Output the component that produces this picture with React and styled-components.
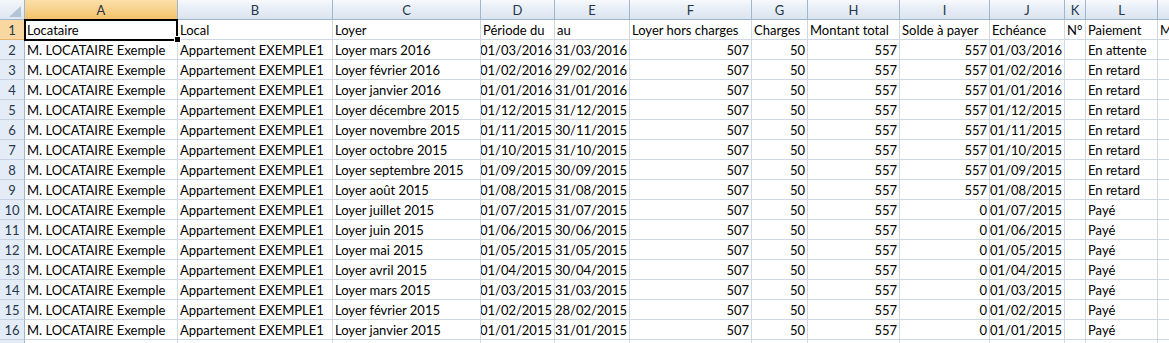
import React from "react";
import styled, { createGlobalStyle } from "styled-components";

const Global = createGlobalStyle`
  html, body { margin: 0; padding: 0; background: #fff; overflow: hidden; }
  body { font-family: Lato, "Liberation Sans", sans-serif; }
`;

const COLS = [
  { key: "A", w: 153 },
  { key: "B", w: 155 },
  { key: "C", w: 148 },
  { key: "D", w: 74 },
  { key: "E", w: 75 },
  { key: "F", w: 122 },
  { key: "G", w: 56 },
  { key: "H", w: 92 },
  { key: "I", w: 90 },
  { key: "J", w: 75 },
  { key: "K", w: 21 },
  { key: "L", w: 72 },
  { key: "M", w: 80 },
];

const Sheet = styled.div`
  display: grid;
  grid-template-columns: 25px ${COLS.map((c) => c.w + "px").join(" ")};
  grid-auto-rows: 20px;
  width: 1169px;
  height: 343px;
  overflow: hidden;
  font-size: 13px;
  color: #000;
`;

const Corner = styled.div`
  position: relative;
  background: linear-gradient(#f4f7fb, #dde6f1);
  border-right: 1px solid #9eb6ce;
  border-bottom: 1px solid #9eb6ce;
  svg { position: absolute; left: 9px; top: 6px; }
`;

const ColHead = styled.div`
  display: flex;
  align-items: center;
  justify-content: center;
  font-family: Lato, "Liberation Sans", sans-serif;
  font-size: 13px;
  color: #27364a;
  background: ${(p) =>
    p.$active
      ? "linear-gradient(#fbe0a9, #f8d38f 45%, #f3c26a)"
      : "linear-gradient(#f7f9fc, #e6edf6 50%, #dbe4f0)"};
  border-right: 1px solid #9eb6ce;
  border-bottom: 1px solid ${(p) => (p.$active ? "#e6a33c" : "#9eb6ce")};
  white-space: nowrap;
  overflow: hidden;
`;

const RowHead = styled.div`
  display: flex;
  align-items: center;
  justify-content: center;
  font-family: Lato, "Liberation Sans", sans-serif;
  font-size: 13px;
  color: #27364a;
  background: ${(p) => (p.$active ? "#f8d8a0" : "#e4ecf7")};
  border-right: 1px solid #9eb6ce;
  border-bottom: 1px solid ${(p) => (p.$active ? "#e6b46a" : "#c5d3e3")};
`;

const Cell = styled.div`
  position: relative;
  display: flex;
  align-items: center;
  justify-content: ${(p) => (p.$num ? "flex-end" : "flex-start")};
  padding: 1px 2px 0 2px;
  border-right: 1px solid #d0d7e5;
  border-bottom: 1px solid #d0d7e5;
  white-space: nowrap;
  overflow: ${(p) => (p.$active ? "visible" : "hidden")};
  box-sizing: border-box;
  line-height: 1;
`;

const ActiveFrame = styled.div`
  position: absolute;
  left: -1px;
  top: -1px;
  right: -1px;
  bottom: -2px;
  border: 2px solid #000;
  pointer-events: none;
  z-index: 2;
`;

const FillHandle = styled.div`
  position: absolute;
  right: -4px;
  bottom: -4px;
  width: 5px;
  height: 5px;
  background: #000;
  border: 1px solid #fff;
  z-index: 3;
`;

const HEAD = [
  "Locataire",
  "Local",
  "Loyer",
  "Période du",
  "au",
  "Loyer hors charges",
  "Charges",
  "Montant total",
  "Solde à payer",
  "Echéance",
  "N°",
  "Paiement",
  "Mode",
];

const months = [
  ["mars 2016", "01/03/2016", "31/03/2016", 557, "En attente"],
  ["février 2016", "01/02/2016", "29/02/2016", 557, "En retard"],
  ["janvier 2016", "01/01/2016", "31/01/2016", 557, "En retard"],
  ["décembre 2015", "01/12/2015", "31/12/2015", 557, "En retard"],
  ["novembre 2015", "01/11/2015", "30/11/2015", 557, "En retard"],
  ["octobre 2015", "01/10/2015", "31/10/2015", 557, "En retard"],
  ["septembre 2015", "01/09/2015", "30/09/2015", 557, "En retard"],
  ["août 2015", "01/08/2015", "31/08/2015", 557, "En retard"],
  ["juillet 2015", "01/07/2015", "31/07/2015", 0, "Payé"],
  ["juin 2015", "01/06/2015", "30/06/2015", 0, "Payé"],
  ["mai 2015", "01/05/2015", "31/05/2015", 0, "Payé"],
  ["avril 2015", "01/04/2015", "30/04/2015", 0, "Payé"],
  ["mars 2015", "01/03/2015", "31/03/2015", 0, "Payé"],
  ["février 2015", "01/02/2015", "28/02/2015", 0, "Payé"],
  ["janvier 2015", "01/01/2015", "31/01/2015", 0, "Payé"],
];

const rows = months.map(([m, d1, d2, solde, pay]) => [
  { v: "M. LOCATAIRE Exemple" },
  { v: "Appartement EXEMPLE1" },
  { v: "Loyer " + m },
  { v: d1, n: true },
  { v: d2, n: true },
  { v: "507", n: true },
  { v: "50", n: true },
  { v: "557", n: true },
  { v: String(solde), n: true },
  { v: d1, n: true },
  { v: "" },
  { v: pay },
  { v: "" },
]);

export default function App() {
  return (
    <>
      <Global />
      <Sheet>
        <Corner>
          <svg width="12" height="11" viewBox="0 0 12 11">
            <polygon points="12,0 12,11 0,11" fill="#b4c4d8" />
          </svg>
        </Corner>
        {COLS.map((c) => (
          <ColHead key={c.key} $active={c.key === "A"}>
            {c.key === "M" ? "" : c.key}
          </ColHead>
        ))}

        <RowHead $active>1</RowHead>
        {HEAD.map((h, i) => (
          <Cell key={"h" + i} $active={i === 0}>
            {h}
            {i === 0 && (
              <>
                <ActiveFrame />
                <FillHandle />
              </>
            )}
          </Cell>
        ))}

        {rows.map((r, ri) => (
          <React.Fragment key={ri}>
            <RowHead>{ri + 2}</RowHead>
            {r.map((c, ci) => (
              <Cell key={ci} $num={c.n}>
                {c.v}
              </Cell>
            ))}
          </React.Fragment>
        ))}

        <RowHead>17</RowHead>
        {COLS.map((c) => (
          <Cell key={"e" + c.key} />
        ))}
      </Sheet>
    </>
  );
}
